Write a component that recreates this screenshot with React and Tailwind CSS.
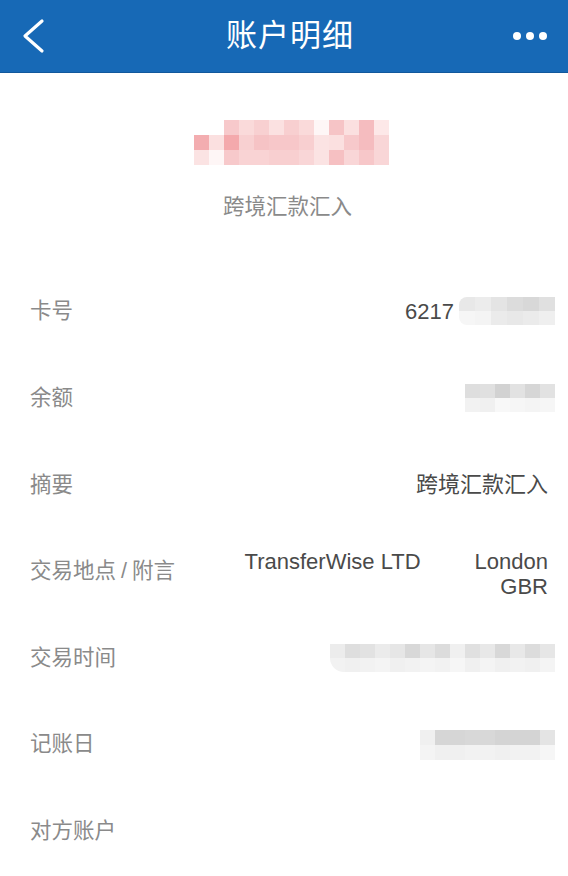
import React from "react";

const FONT = "font-['Liberation_Sans','Noto_Sans_CJK_SC',sans-serif]";

const pinkRows = [
  ["bg-transparent", "bg-transparent", "bg-[#f7c9cb]", "bg-[#fadada]", "bg-[#f8d0d1]", "bg-[#fbe1e1]", "bg-[#f8cfd0]", "bg-[#fadada]", "bg-[#fef6f6]", "bg-[#f6c4c6]", "bg-[#fbe0e0]", "bg-[#f5bcbf]", "bg-[#fde8e8]"],
  ["bg-[#f3adb0]", "bg-[#fbe0e0]", "bg-[#f4a9ac]", "bg-[#f8d0d1]", "bg-[#f6c3c5]", "bg-[#f7c7c9]", "bg-[#f7c7c9]", "bg-[#f8cfd0]", "bg-[#fbe3e3]", "bg-[#fbe0e0]", "bg-[#f7c9cb]", "bg-[#f5bcbf]", "bg-[#f9d6d7]"],
  ["bg-[#fbe3e3]", "bg-[#fef6f6]", "bg-[#f7c9cb]", "bg-[#f9d3d4]", "bg-[#f9d3d4]", "bg-[#f8cfd0]", "bg-[#f8cfd0]", "bg-[#f9d6d7]", "bg-[#fbe3e3]", "bg-[#f6c0c2]", "bg-[#f9d6d7]", "bg-[#f7c7c9]", "bg-[#f9d6d7]"],
];

const cardRows = [
  ["bg-[#e8e8e8]", "bg-[#ececec]", "bg-[#e4e4e4]", "bg-[#dcdcdc]", "bg-[#d8d8d8]", "bg-[#e0e0e0]"],
  ["bg-[#f6f6f6]", "bg-[#f4f4f4]", "bg-[#ebebeb]", "bg-[#e8e8e8]", "bg-[#ebebeb]", "bg-[#efefef]"],
];

const balanceRows = [
  ["bg-[#dedede]", "bg-[#e0e0e0]", "bg-[#d2d2d2]", "bg-[#e2e2e2]", "bg-[#d6d6d6]", "bg-[#e2e2e2]"],
  ["bg-[#f2f2f2]", "bg-[#f0f0f0]", "bg-[#f8f8f8]", "bg-[#f6f6f6]", "bg-[#f4f4f4]", "bg-[#f6f6f6]"],
];

const timeRows = [
  ["bg-[#ececec]", "bg-[#dedede]", "bg-[#e2e2e2]", "bg-[#ebebeb]", "bg-[#e6e6e6]", "bg-[#d8d8d8]", "bg-[#e6e6e6]", "bg-[#dcdcdc]", "bg-[#f0f0f0]", "bg-[#e0e0e0]", "bg-[#e8e8e8]", "bg-[#d8d8d8]", "bg-[#e8e8e8]", "bg-[#dcdcdc]", "bg-[#e6e6e6]"],
  ["bg-[#f2f2f2]", "bg-[#f0f0f0]", "bg-[#f2f2f2]", "bg-[#f4f4f4]", "bg-[#f0f0f0]", "bg-[#f2f2f2]", "bg-[#f4f4f4]", "bg-[#f2f2f2]", "bg-[#f6f6f6]", "bg-[#f0f0f0]", "bg-[#f4f4f4]", "bg-[#f0f0f0]", "bg-[#f2f2f2]", "bg-[#f0f0f0]", "bg-[#f4f4f4]"],
];

const dateRows = [
  ["bg-[#f0f0f0]", "bg-[#d6d6d6]", "bg-[#d6d6d6]", "bg-[#d8d8d8]", "bg-[#d8d8d8]", "bg-[#d4d4d4]", "bg-[#d4d4d4]", "bg-[#d4d4d4]", "bg-[#e4e4e4]"],
  ["bg-[#f4f4f4]", "bg-[#f0f0f0]", "bg-[#f0f0f0]", "bg-[#f2f2f2]", "bg-[#f2f2f2]", "bg-[#f0f0f0]", "bg-[#f2f2f2]", "bg-[#f2f2f2]", "bg-[#f6f6f6]"],
];

// pixelated blur blocks
const Mosaic = ({ rows, cell = "w-[15px] h-[14px]", className = "" }) => (
  <div className={`flex flex-col ${className}`}>
    {rows.map((row, i) => (
      <div key={i} className="flex">
        {row.map((c, j) => (
          <div key={j} className={`${cell} ${c}`} />
        ))}
      </div>
    ))}
  </div>
);

const Row = ({ label, children }) => (
  <div className="h-[86.67px] flex items-center justify-between pl-[30px] pr-[20px]">
    <span className="text-[21.5px] text-[#8a8a8a] shrink-0">{label}</span>
    <div className="flex items-center text-[22px] text-[#4a4a4a]">{children}</div>
  </div>
);

const App = () => {
  return (
    <div className={`w-[568px] h-[876px] bg-white overflow-hidden ${FONT}`}>
      {/* Top bar */}
      <div className="h-[73px] bg-[#1769b6] border-b border-[#11589c] grid grid-cols-[1fr_auto_1fr] items-center px-[20px]">
        <svg width="26" height="40" viewBox="0 0 26 40" className="ml-[1px]">
          <path d="M21 5 L4 20 L21 35" fill="none" stroke="#fff" strokeWidth="3.2" strokeLinecap="round" strokeLinejoin="round" />
        </svg>
        <span className="text-[31px] text-white tracking-[1px] ml-[12px]">账户明细</span>
        <div className="flex justify-end gap-[5px] mr-[1px]">
          <span className="w-[8px] h-[8px] rounded-full bg-white" />
          <span className="w-[8px] h-[8px] rounded-full bg-white" />
          <span className="w-[8px] h-[8px] rounded-full bg-white" />
        </div>
      </div>

      {/* Summary */}
      <div className="flex flex-col items-center pt-[47px]">
        <Mosaic rows={pinkRows} cell="w-[15px] h-[15px]" className="ml-[15px]" />
        <div className="mt-[27px] ml-[7px] text-[21.5px] leading-[30px] text-[#8a8a8a]">跨境汇款汇入</div>
      </div>

      {/* Detail rows */}
      <div className="mt-[46px]">
        <Row label="卡号">
          <span>6217</span>
          <Mosaic rows={cardRows} cell="w-[16px] h-[14px]" className="ml-[5px] -mr-[7px] rounded-l-[8px] overflow-hidden" />
        </Row>
        <Row label="余额">
          <Mosaic rows={balanceRows} className="-mr-[7px]" />
        </Row>
        <Row label="摘要">
          <span>跨境汇款汇入</span>
        </Row>
        <Row label={<>交易地点<span className="mx-[5px]">/</span>附言</>}>
          <div className="flex items-start mt-[6px] leading-[25px]">
            <span>TransferWise LTD</span>
            <span className="ml-[54px] text-right">London<br />GBR</span>
          </div>
        </Row>
        <Row label="交易时间">
          <Mosaic rows={timeRows} className="-mr-[7px] rounded-bl-[14px] overflow-hidden" />
        </Row>
        <Row label="记账日">
          <Mosaic rows={dateRows} cell="w-[15px] h-[15px]" className="-mr-[7px]" />
        </Row>
        <Row label="对方账户" />
      </div>
    </div>
  );
};

export default App;
